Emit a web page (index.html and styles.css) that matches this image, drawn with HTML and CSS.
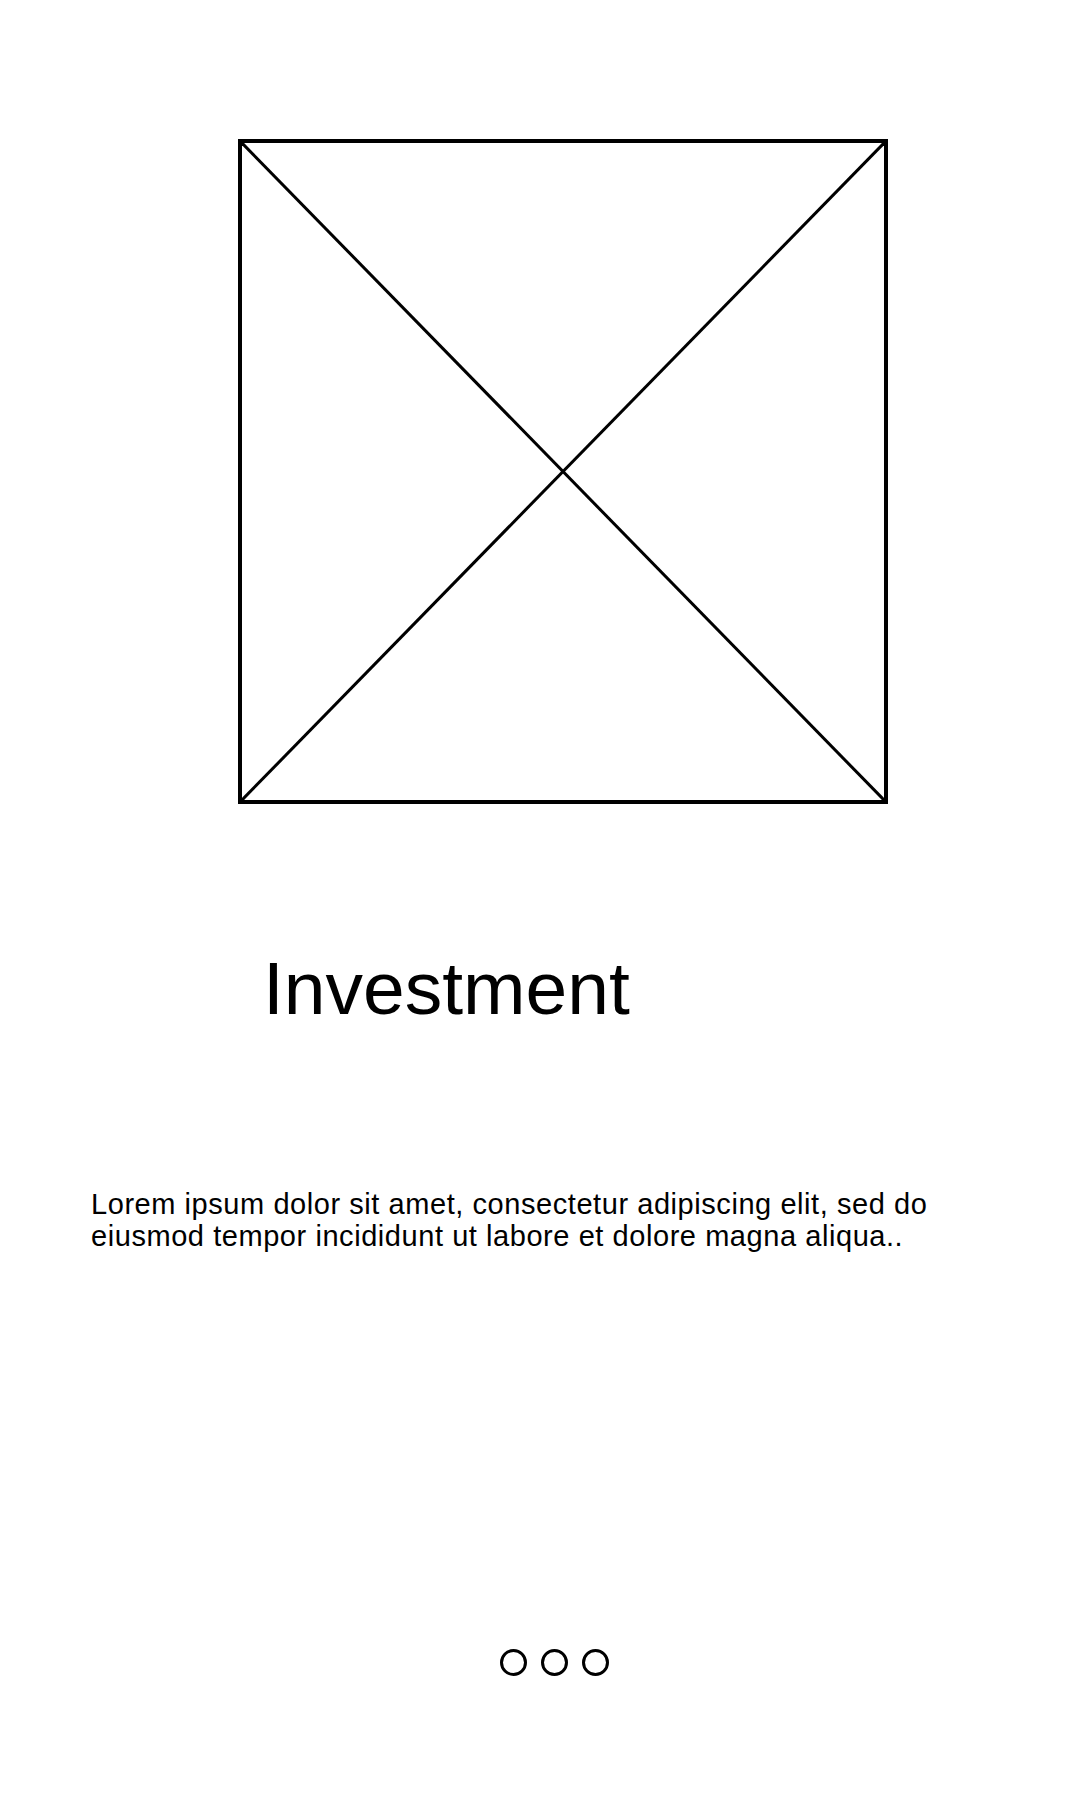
FILE: index.html
```html
<!DOCTYPE html>
<html>
<head>
<meta charset="utf-8">
<link rel="stylesheet" href="styles.css">
</head>
<body>
<main class="screen">
  <div class="placeholder">
    <svg class="cross" viewBox="0 0 100 100" preserveAspectRatio="none">
      <line x1="0" y1="0" x2="100" y2="100" />
      <line x1="100" y1="0" x2="0" y2="100" />
    </svg>
  </div>
  <h1 class="title">Investment</h1>
  <p class="text">Lorem ipsum dolor sit amet, consectetur adipiscing elit, sed do eiusmod tempor incididunt ut labore et dolore magna aliqua..</p>
  <div class="dots">
    <span class="dot"></span>
    <span class="dot"></span>
    <span class="dot"></span>
  </div>
</main>
</body>
</html>
```
FILE: styles.css
```css
html, body {
  margin: 0;
  padding: 0;
  background: #fff;
}
body {
  font-family: "Liberation Sans", Arial, sans-serif;
  color: #000;
}
.screen {
  width: 1080px;
  height: 1800px;
  padding-top: 139px;
  box-sizing: border-box;
  display: flex;
  flex-direction: column;
}
.placeholder {
  margin-left: 238px;
  width: 650px;
  height: 665px;
  box-sizing: border-box;
  border: 4px solid #000;
  position: relative;
}
.cross {
  display: block;
  width: 100%;
  height: 100%;
}
.cross line {
  stroke: #000;
  stroke-width: 3;
  vector-effect: non-scaling-stroke;
}
.title {
  margin: 147px 0 0 263px;
  font-size: 75px;
  font-weight: normal;
  line-height: 75px;
}
.text {
  margin: 162px 0 0 91px;
  width: 900px;
  font-size: 29px;
  line-height: 32px;
  letter-spacing: 0.56px;
}
.dots {
  margin: 397px 0 0 500px;
  display: flex;
  gap: 14px;
}
.dot {
  width: 27px;
  height: 27px;
  box-sizing: border-box;
  border: 3px solid #000;
  border-radius: 50%;
}
```
